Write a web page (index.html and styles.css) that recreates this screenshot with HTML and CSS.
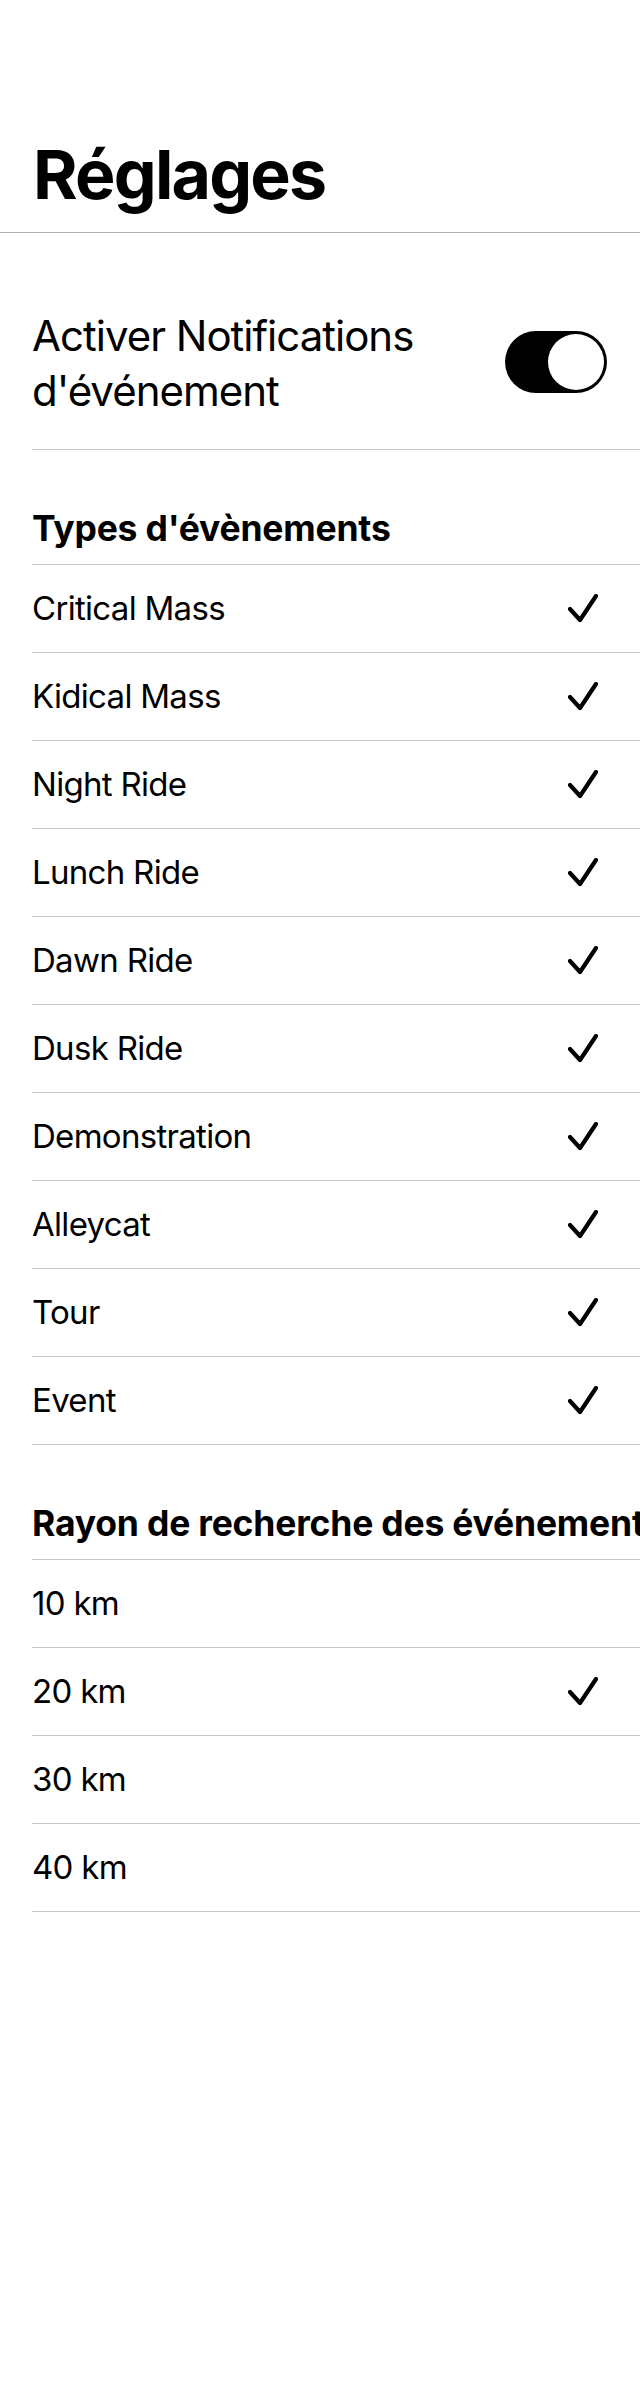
FILE: index.html
```html
<!DOCTYPE html>
<html lang="fr">
<head>
<meta charset="utf-8">
<title>Réglages</title>
<link rel="stylesheet" href="styles.css">
</head>
<body>
<header class="nav">
  <h1 class="nav-title">Réglages</h1>
</header>

<main class="content">
  <section class="group group-toggle">
    <div class="toggle-row">
      <span class="toggle-label">Activer Notifications d'événement</span>
      <span class="switch is-on" role="switch" aria-checked="true"><span class="knob"></span></span>
    </div>
  </section>

  <section class="group">
    <h2 class="group-header">Types d'évènements</h2>
    <ul class="list">
      <li class="row"><span class="row-label">Critical Mass</span><svg class="check" viewBox="0 0 30 30"><path d="M2 15 L12 26 L28 2"/></svg></li>
      <li class="row"><span class="row-label">Kidical Mass</span><svg class="check" viewBox="0 0 30 30"><path d="M2 15 L12 26 L28 2"/></svg></li>
      <li class="row"><span class="row-label">Night Ride</span><svg class="check" viewBox="0 0 30 30"><path d="M2 15 L12 26 L28 2"/></svg></li>
      <li class="row"><span class="row-label">Lunch Ride</span><svg class="check" viewBox="0 0 30 30"><path d="M2 15 L12 26 L28 2"/></svg></li>
      <li class="row"><span class="row-label">Dawn Ride</span><svg class="check" viewBox="0 0 30 30"><path d="M2 15 L12 26 L28 2"/></svg></li>
      <li class="row"><span class="row-label">Dusk Ride</span><svg class="check" viewBox="0 0 30 30"><path d="M2 15 L12 26 L28 2"/></svg></li>
      <li class="row"><span class="row-label">Demonstration</span><svg class="check" viewBox="0 0 30 30"><path d="M2 15 L12 26 L28 2"/></svg></li>
      <li class="row"><span class="row-label">Alleycat</span><svg class="check" viewBox="0 0 30 30"><path d="M2 15 L12 26 L28 2"/></svg></li>
      <li class="row"><span class="row-label">Tour</span><svg class="check" viewBox="0 0 30 30"><path d="M2 15 L12 26 L28 2"/></svg></li>
      <li class="row"><span class="row-label">Event</span><svg class="check" viewBox="0 0 30 30"><path d="M2 15 L12 26 L28 2"/></svg></li>
    </ul>
  </section>

  <section class="group">
    <h2 class="group-header">Rayon de recherche des événements</h2>
    <ul class="list">
      <li class="row"><span class="row-label">10 km</span></li>
      <li class="row"><span class="row-label">20 km</span><svg class="check" viewBox="0 0 30 30"><path d="M2 15 L12 26 L28 2"/></svg></li>
      <li class="row"><span class="row-label">30 km</span></li>
      <li class="row"><span class="row-label">40 km</span></li>
    </ul>
  </section>
</main>
</body>
</html>
```

FILE: styles.css
```css
* {
  box-sizing: border-box;
}

html, body {
  margin: 0;
  padding: 0;
  background: #ffffff;
}

body {
  font-family: Inter, "Noto Sans", "DejaVu Sans", sans-serif;
  color: #000000;
  overflow-x: hidden;
}

.nav {
  height: 233px;
  padding: 133px 32px 0 33px;
  border-bottom: 1px solid #b2b2b2;
}

.nav-title {
  margin: 0;
  font-size: 68px;
  line-height: 82px;
  font-weight: 700;
  letter-spacing: -1.8px;
  white-space: nowrap;
}

.content {
  display: block;
}

.group {
  margin-left: 32px;
}

.group-toggle {
  margin-top: 44px;
}

.toggle-row {
  height: 173px;
  display: flex;
  align-items: center;
  justify-content: space-between;
  gap: 20px;
  padding-right: 33px;
  border-bottom: 1px solid #c8c8c8;
}

.toggle-label {
  font-size: 42px;
  line-height: 55px;
  font-weight: 400;
  letter-spacing: -1px;
  max-width: 440px;
}

.switch {
  position: relative;
  flex: 0 0 auto;
  width: 102px;
  height: 62px;
  border-radius: 31px;
  background: #000000;
  margin-top: -2px;
}

.knob {
  position: absolute;
  top: 3px;
  right: 3px;
  width: 56px;
  height: 56px;
  border-radius: 50%;
  background: #ffffff;
}

.group-header {
  margin: 0;
  height: 115px;
  padding-top: 58px;
  font-size: 35.5px;
  line-height: 41px;
  font-weight: 700;
  letter-spacing: -0.2px;
  white-space: nowrap;
  overflow: visible;
  border-bottom: 1px solid #c8c8c8;
}

.list {
  list-style: none;
  margin: 0;
  padding: 0;
}

.row {
  height: 88px;
  display: flex;
  align-items: center;
  justify-content: space-between;
  padding-right: 42px;
  border-bottom: 1px solid #c8c8c8;
}

.row-label {
  font-size: 33px;
  line-height: 41px;
  font-weight: 400;
  letter-spacing: -0.7px;
}

.check {
  width: 30px;
  height: 30px;
  fill: none;
  stroke: #000000;
  stroke-width: 4.2;
  stroke-linecap: round;
  stroke-linejoin: round;
}
```
